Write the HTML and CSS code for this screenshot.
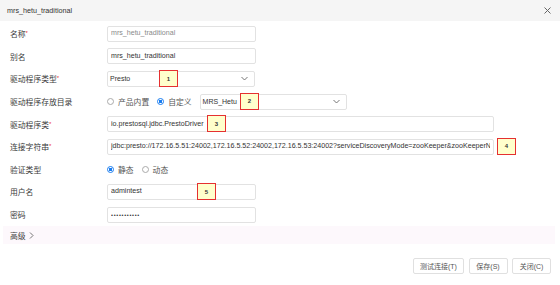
FILE: index.html
```html
<!DOCTYPE html>
<html lang="zh-CN">
<head>
    <meta charset="UTF-8">
    <title>mrs_hetu_traditional</title>
    <link rel="stylesheet" href="styles.css">
</head>
<body>
    <div class="dialog">
        <div class="header">
            <span class="title">mrs_hetu_traditional</span>
            <svg class="close" width="7" height="7" viewBox="0 0 7 7"><path d="M0.5 0.5L6.5 6.5M6.5 0.5L0.5 6.5" stroke="#666" stroke-width="1" fill="none"/></svg>
        </div>
        <div class="form">
            <div class="row">
                <label class="label">名称<span class="req">*</span></label>
                <div class="field">
                    <input class="input short disabled" type="text" value="mrs_hetu_traditional" spellcheck="false" readonly>
                </div>
            </div>
            <div class="row">
                <label class="label">别名</label>
                <div class="field">
                    <input class="input short" type="text" value="mrs_hetu_traditional" spellcheck="false">
                </div>
            </div>
            <div class="row">
                <label class="label">驱动程序类型<span class="req">*</span></label>
                <div class="field">
                    <div class="select short">
                        <span>Presto</span>
                        <svg width="7" height="5" viewBox="0 0 7 5"><polyline points="0.5,1 3.5,4 6.5,1" stroke="#666" stroke-width="0.9" fill="none"/></svg>
                    </div>
                    <span class="badge b1">1</span>
                </div>
            </div>
            <div class="row">
                <label class="label">驱动程序存放目录</label>
                <div class="field">
                    <span class="radio"><i class="dot"></i>产品内置</span>
                    <span class="radio"><i class="dot on"></i>自定义</span>
                    <div class="select dir">
                        <span>MRS_Hetu</span>
                        <svg width="7" height="5" viewBox="0 0 7 5"><polyline points="0.5,1 3.5,4 6.5,1" stroke="#666" stroke-width="0.9" fill="none"/></svg>
                    </div>
                    <span class="badge b2">2</span>
                </div>
            </div>
            <div class="row">
                <label class="label">驱动程序类<span class="req">*</span></label>
                <div class="field">
                    <input class="input long" type="text" value="io.prestosql.jdbc.PrestoDriver" spellcheck="false">
                    <span class="badge b3">3</span>
                </div>
            </div>
            <div class="row">
                <label class="label">连接字符串<span class="req">*</span></label>
                <div class="field">
                    <input class="input long" type="text" value="jdbc:presto://172.16.5.51:24002,172.16.5.52:24002,172.16.5.53:24002?serviceDiscoveryMode=zooKeeper&amp;zooKeeperNamespace=hsbroker" spellcheck="false">
                    <span class="badge b4">4</span>
                </div>
            </div>
            <div class="row">
                <label class="label">验证类型</label>
                <div class="field">
                    <span class="radio"><i class="dot on"></i>静态</span>
                    <span class="radio"><i class="dot"></i>动态</span>
                </div>
            </div>
            <div class="row">
                <label class="label">用户名</label>
                <div class="field">
                    <input class="input short" type="text" value="admintest" spellcheck="false">
                    <span class="badge b5">5</span>
                </div>
            </div>
            <div class="row">
                <label class="label">密码</label>
                <div class="field">
                    <input class="input short pwd" type="password" value="abcdefghijk">
                </div>
            </div>
        </div>
        <div class="advanced">
            高级
            <svg width="5" height="7" viewBox="0 0 5 7"><polyline points="1,0.5 4,3.5 1,6.5" stroke="#666" stroke-width="0.9" fill="none"/></svg>
        </div>
        <div class="footer">
            <button class="btn">测试连接(T)</button>
            <button class="btn">保存(S)</button>
            <button class="btn">关闭(C)</button>
        </div>
    </div>
</body>
</html>
```

FILE: styles.css
```css
body {
    margin: 0;
    background-color: white;
    font-family: "Liberation Sans", "Noto Sans CJK SC", sans-serif;
    font-size: 7px;
    color: #333;
}
.dialog {
    width: 560px;
    height: 285px;
}
.header {
    height: 21px;
    background-color: #f5f5f5;
    display: flex;
    align-items: center;
    justify-content: space-between;
    padding: 0 9px 0 7px;
}
.title {
    font-size: 7.2px;
    color: #333;
}
.form {
    padding-top: 1.5px;
}
.row {
    display: flex;
    align-items: center;
    height: 22.6px;
    padding-left: 10px;
}
.label {
    width: 97px;
    font-size: 7.8px;
    color: #3a3a3a;
    flex-shrink: 0;
}
.req {
    color: #e33;
    font-size: 6px;
    vertical-align: 2px;
}
.field {
    position: relative;
    align-self: stretch;
    flex: 1;
    display: flex;
    align-items: center;
}
.input {
    box-sizing: border-box;
    height: 16px;
    line-height: 10px;
    border: 1px solid #e2e2e2;
    border-radius: 2px;
    padding: 1px 3px 2px;
    font-family: "Liberation Sans", "Noto Sans CJK SC", sans-serif;
    font-size: 7.1px;
    color: #333;
    background-color: white;
    outline: none;
}
.short {
    width: 149px;
}
.long {
    width: 387px;
}
.disabled {
    color: #8a8a8a;
}
.pwd {
    font-size: 5.5px;
    letter-spacing: 0.7px;
    padding-top: 2px;
    padding-bottom: 1px;
}
.select {
    box-sizing: border-box;
    height: 16px;
    border: 1px solid #e2e2e2;
    border-radius: 2px;
    padding: 0 6px 0 2px;
    display: flex;
    align-items: center;
    justify-content: space-between;
    font-size: 7px;
    color: #333;
}
.select.short {
    width: 148px;
}
.select.dir {
    width: 147px;
}
.radio {
    display: flex;
    align-items: center;
    font-size: 7.8px;
    color: #555;
    margin-right: 8px;
}
.dot {
    box-sizing: border-box;
    width: 7px;
    height: 7px;
    border: 1px solid #aaa;
    border-radius: 50%;
    margin-right: 4px;
    background-color: white;
}
.dot.on {
    border-color: #1a7df0;
    background: radial-gradient(circle, #1a7df0 45%, white 55%);
}
.badge {
    position: absolute;
    top: 2.5px;
    box-sizing: border-box;
    width: 19px;
    height: 17px;
    border: 1px solid #e53030;
    background-color: #ffffcc;
    font-size: 6px;
    font-weight: bold;
    color: #333;
    display: flex;
    align-items: center;
    justify-content: center;
}
.b1 { left: 52px; }
.b2 { left: 133px; }
.b3 { left: 100px; }
.b4 { left: 390px; }
.b5 { left: 90px; }
.advanced {
    margin: 0.5px 5px 0 3px;
    height: 18px;
    background-color: #fdf8fc;
    display: flex;
    align-items: center;
    gap: 3px;
    padding-left: 7px;
    font-size: 7.8px;
    color: #444;
}
.footer {
    display: flex;
    justify-content: flex-end;
    gap: 4.5px;
    padding: 14px 9px 0 0;
}
.btn {
    height: 16px;
    padding: 0 5px;
    border: 1px solid #e0e0e0;
    border-radius: 2px;
    background-color: white;
    font-family: "Liberation Sans", "Noto Sans CJK SC", sans-serif;
    font-size: 7px;
    color: #555;
}
.btn:first-child {
    width: 51px;
}
.btn:nth-child(2), .btn:nth-child(3) {
    width: 39px;
}
```
